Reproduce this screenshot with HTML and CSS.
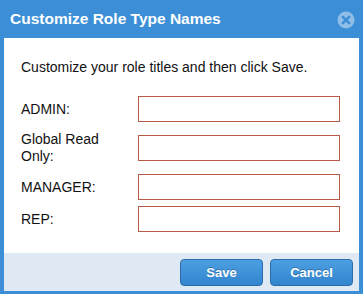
FILE: index.html
```html
<!DOCTYPE html>
<html>
<head>
<meta charset="utf-8">
<link rel="stylesheet" href="styles.css">
</head>
<body>
<div class="dialog">
  <div class="titlebar">
    <span class="title">Customize Role Type Names</span>
    <span class="close">
      <svg width="18" height="18" viewBox="0 0 18 18">
        <circle cx="9" cy="9" r="8.5" fill="#8fbfe8"/>
        <path d="M5.8 5.8 L12.2 12.2 M12.2 5.8 L5.8 12.2" stroke="#3d8fd6" stroke-width="2.6" stroke-linecap="round"/>
      </svg>
    </span>
  </div>
  <div class="content">
    <p class="intro">Customize your role titles and then click Save.</p>
    <div class="form">
      <label class="label">ADMIN:</label>
      <input class="field" type="text">
      <label class="label label-tall">Global Read<br>Only:</label>
      <input class="field" type="text">
      <label class="label">MANAGER:</label>
      <input class="field" type="text">
      <label class="label">REP:</label>
      <input class="field" type="text">
    </div>
  </div>
  <div class="footer">
    <button class="btn">Save</button>
    <button class="btn">Cancel</button>
  </div>
</div>
</body>
</html>
```
FILE: styles.css
```css
html, body {
  margin: 0;
  padding: 0;
}
body {
  font-family: "Liberation Sans", Arial, sans-serif;
  background: #ffffff;
}
.dialog {
  width: 363px;
  height: 294px;
  box-sizing: border-box;
  background: #3c8fd6;
  padding: 0 4px 3px 4px;
  display: flex;
  flex-direction: column;
}
.titlebar {
  height: 38px;
  flex: 0 0 38px;
  display: flex;
  align-items: center;
  justify-content: space-between;
  padding: 0 4px 0 6px;
}
.title {
  color: #ffffff;
  font-weight: bold;
  font-size: 15.5px;
  line-height: 38px;
}
.close {
  display: flex;
  width: 18px;
  height: 18px;
  margin-top: 1px;
}
.content {
  flex: 1;
  background: #ffffff;
  padding: 21px 0 0 17px;
}
.intro {
  margin: 0 0 20px 0;
  font-size: 14px;
  line-height: 17px;
  color: #111111;
}
.form {
  display: grid;
  grid-template-columns: 117px 202px;
  row-gap: 6px;
  align-items: center;
}
.label {
  font-size: 14px;
  line-height: 17px;
  color: #111111;
}
.label-tall {
  padding: 3px 0;
}
.field {
  box-sizing: border-box;
  width: 202px;
  height: 26px;
  margin: 0;
  border: 1px solid #b85a48;
  border-radius: 0;
  background: #ffffff;
  padding: 2px 4px;
  font-family: "Liberation Sans", Arial, sans-serif;
  font-size: 13px;
  outline: none;
}
.footer {
  flex: 0 0 38px;
  height: 38px;
  box-sizing: border-box;
  background: #dfe9f3;
  display: flex;
  justify-content: flex-end;
  align-items: flex-start;
  gap: 7px;
  padding: 6px 6px 0 0;
}
.btn {
  width: 83px;
  height: 27px;
  box-sizing: border-box;
  border: 1px solid #2a6daa;
  border-radius: 4px;
  background: linear-gradient(#4d9fe2, #3285cd);
  color: #ffffff;
  font-family: "Liberation Sans", Arial, sans-serif;
  font-weight: bold;
  font-size: 13px;
  text-shadow: 0 -1px 0 rgba(0, 0, 0, 0.25);
  padding: 0;
  cursor: pointer;
}
```
